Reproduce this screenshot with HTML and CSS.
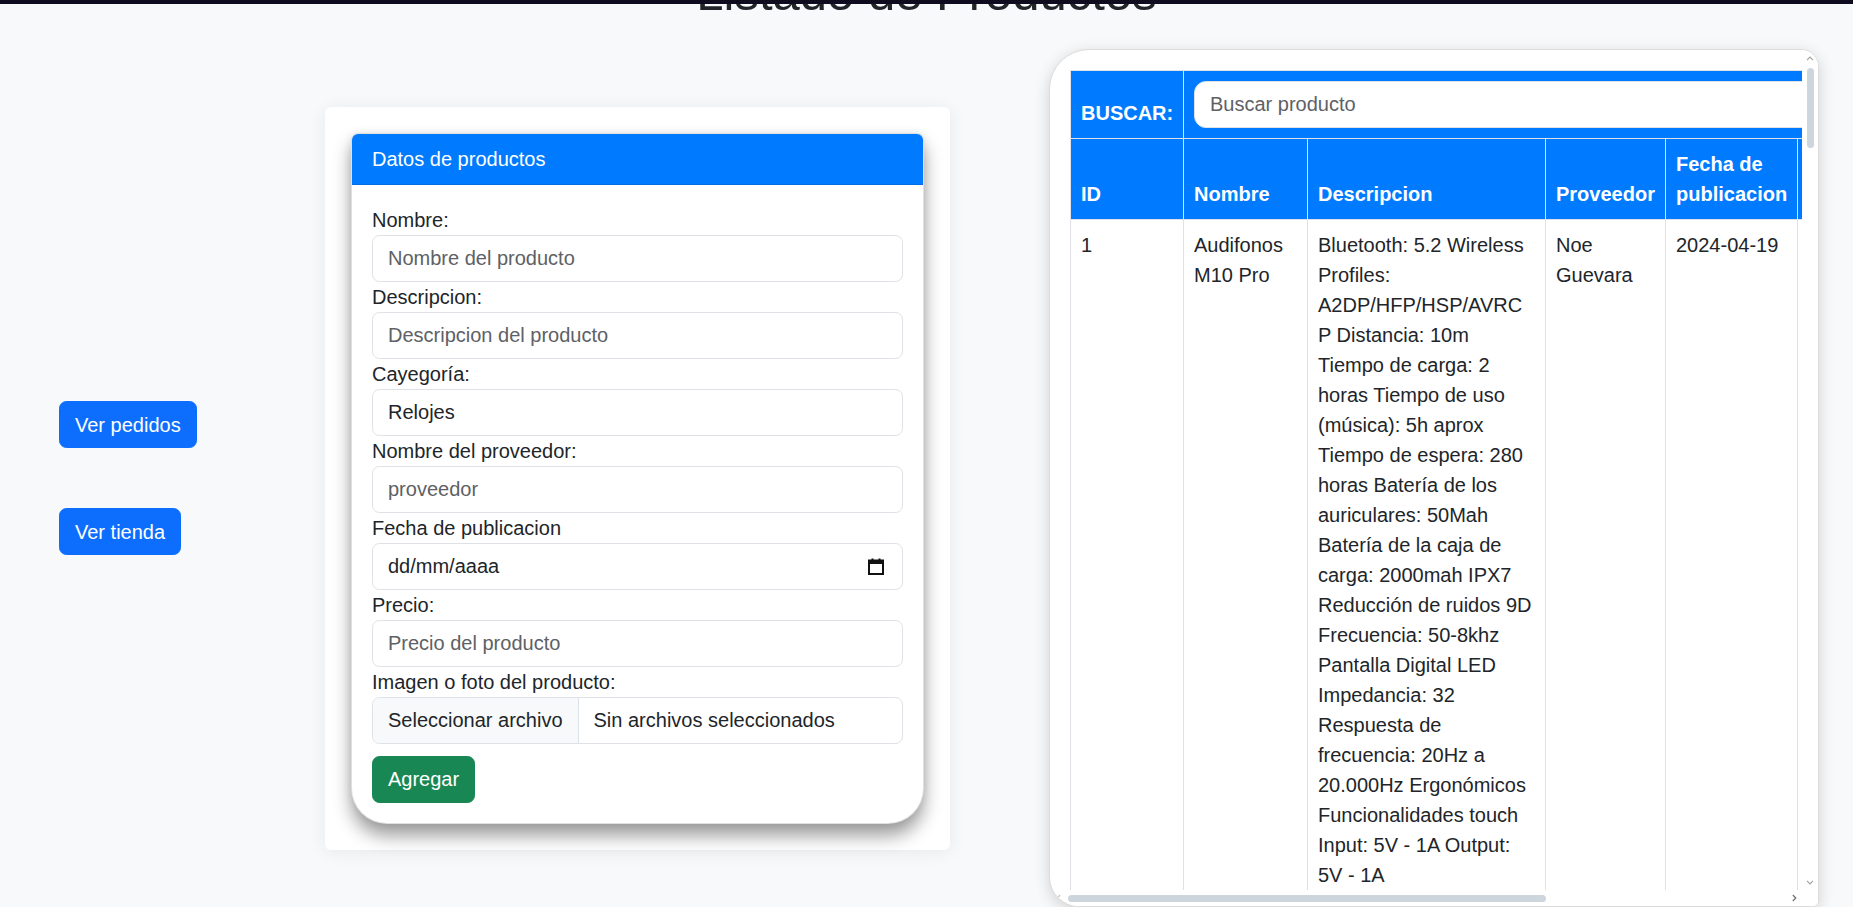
FILE: index.html
```html
<!DOCTYPE html>
<html lang="es">
<head>
<meta charset="utf-8">
<title>Listado de Productos</title>
<link rel="stylesheet" href="styles.css">
</head>
<body>
<div class="topbar"></div>
<h1 class="page-title">Listado de Productos</h1>
<main class="layout">
  <nav class="side">
    <a class="btn btn-primary">Ver pedidos</a>
    <a class="btn btn-primary">Ver tienda</a>
  </nav>

  <section class="panel">
    <div class="card">
      <div class="card-header">Datos de productos</div>
      <form class="card-body">
        <label class="field-label">Nombre:</label>
        <input class="form-control" type="text" placeholder="Nombre del producto">
        <label class="field-label">Descripcion:</label>
        <input class="form-control" type="text" placeholder="Descripcion del producto">
        <label class="field-label">Cayegoría:</label>
        <input class="form-control" type="text" value="Relojes">
        <label class="field-label">Nombre del proveedor:</label>
        <input class="form-control" type="text" placeholder="proveedor">
        <label class="field-label">Fecha de publicacion</label>
        <div class="form-control date-control">
          <span>dd/mm/aaaa</span>
          <svg class="cal-icon" width="16" height="17" viewBox="0 0 16 17" aria-hidden="true">
            <rect x="1" y="2.5" width="14" height="13.5" fill="none" stroke="#111" stroke-width="2"/>
            <rect x="1" y="2.5" width="14" height="3.5" fill="#111"/>
            <rect x="3.5" y="0.5" width="2" height="3" fill="#111"/>
            <rect x="10.5" y="0.5" width="2" height="3" fill="#111"/>
          </svg>
        </div>
        <label class="field-label">Precio:</label>
        <input class="form-control" type="text" placeholder="Precio del producto">
        <label class="field-label">Imagen o foto del producto:</label>
        <div class="form-control file-control">
          <span class="file-btn">Seleccionar archivo</span>
          <span class="file-name">Sin archivos seleccionados</span>
        </div>
        <button type="button" class="btn btn-success">Agregar</button>
      </form>
    </div>
  </section>

  <section class="table-card">
    <div class="table-scroll">
      <table class="products">
        <colgroup>
          <col class="c-id"><col class="c-nombre"><col class="c-desc"><col class="c-prov"><col class="c-fecha"><col class="c-precio"><col class="c-img"><col class="c-acc">
        </colgroup>
        <thead>
          <tr>
            <th class="nowrap">BUSCAR:</th>
            <th colspan="7"><input class="search" type="text" placeholder="Buscar producto"></th>
          </tr>
          <tr>
            <th>ID</th>
            <th>Nombre</th>
            <th>Descripcion</th>
            <th>Proveedor</th>
            <th>Fecha de publicacion</th>
            <th>Precio</th>
            <th>Imagen</th>
            <th>Acciones</th>
          </tr>
        </thead>
        <tbody>
          <tr>
            <td>1</td>
            <td>Audifonos M10 Pro</td>
            <td>Bluetooth: 5.2 Wireless Profiles: A2DP/HFP/HSP/AVRCP Distancia: 10m Tiempo de carga: 2 horas Tiempo de uso (música): 5h aprox Tiempo de espera: 280 horas Batería de los auriculares: 50Mah Batería de la caja de carga: 2000mah IPX7 Reducción de ruidos 9D Frecuencia: 50-8khz Pantalla Digital LED Impedancia: 32 Respuesta de frecuencia: 20Hz a 20.000Hz Ergonómicos Funcionalidades touch Input: 5V - 1A Output: 5V - 1A</td>
            <td>Noe Guevara</td>
            <td>2024-04-19</td>
            <td>150</td>
            <td>audifonos.jpg</td>
            <td>Editar Eliminar</td>
          </tr>
          <tr>
            <td>2</td>
            <td>Reloj Inteligente T500</td>
            <td>Pantalla: 1.75 pulgadas HD Bluetooth: 5.0 Llamadas por Bluetooth Monitor de ritmo cardiaco Monitor de presión arterial Contador de pasos Monitor de sueño Batería: 180mah Resistente al agua IP67</td>
            <td>Noe Guevara</td>
            <td>2024-04-19</td>
            <td>250</td>
            <td>reloj-t500.jpg</td>
            <td>Editar Eliminar</td>
          </tr>
        </tbody>
      </table>
    </div>
    <div class="vscroll">
      <span class="sb-btn">
        <svg width="8" height="5" viewBox="0 0 8 5" aria-hidden="true"><path d="M1 4.2 L4 1.2 L7 4.2" fill="none" stroke="#a3a3a3" stroke-width="1.2"/></svg>
      </span>
      <span class="vthumb"></span>
      <span class="sb-fill"></span>
      <span class="sb-btn">
        <svg width="8" height="5" viewBox="0 0 8 5" aria-hidden="true"><path d="M1 0.8 L4 3.8 L7 0.8" fill="none" stroke="#a3a3a3" stroke-width="1.2"/></svg>
      </span>
    </div>
    <div class="hscroll">
      <span class="sb-btn">
        <svg width="5" height="8" viewBox="0 0 5 8" aria-hidden="true"><path d="M4.2 1 L1.2 4 L4.2 7" fill="none" stroke="#c4c4c4" stroke-width="1.2"/></svg>
      </span>
      <span class="hthumb"></span>
      <span class="sb-fill"></span>
      <span class="sb-btn">
        <svg width="5" height="8" viewBox="0 0 5 8" aria-hidden="true"><path d="M0.8 1 L3.8 4 L0.8 7" fill="none" stroke="#6f6f6f" stroke-width="1.2"/></svg>
      </span>
    </div>
    <div class="sb-corner"></div>
  </section>
</main>
</body>
</html>
```

FILE: styles.css
```css
* {
  box-sizing: border-box;
}

html, body {
  margin: 0;
  padding: 0;
}

body {
  background: #f8f9fa;
  color: #212529;
  font-family: "Liberation Sans", Arial, sans-serif;
  font-size: 20px;
  line-height: 30px;
  overflow: hidden;
}

.topbar {
  position: fixed;
  top: 0;
  left: 0;
  right: 0;
  height: 4px;
  background: #0e0c1e;
  z-index: 10;
}

.page-title {
  margin: -36px 0 26px;
  font-size: 49px;
  line-height: 59px;
  font-weight: 400;
  text-align: center;
  color: #212529;
}

.layout {
  display: flex;
  align-items: center;
  padding-left: 59px;
}

.side {
  width: 266px;
  flex: none;
  display: flex;
  flex-direction: column;
  align-items: flex-start;
  gap: 60px;
}

.btn {
  display: inline-block;
  font-family: inherit;
  font-size: 20px;
  line-height: 30px;
  padding: 7.5px 15px;
  border: 1px solid transparent;
  border-radius: 7.5px;
  color: #fff;
  text-decoration: none;
  cursor: pointer;
}

.btn-primary {
  background: #0d6efd;
  border-color: #0d6efd;
}

.btn-success {
  background: #198754;
  border-color: #198754;
  margin-top: 12px;
}

/* Form panel */
.panel {
  width: 625px;
  flex: none;
  background: #fff;
  border-radius: 6px;
  padding: 26px;
  box-shadow: 0 2px 18px rgba(0, 0, 0, 0.07);
}

.card {
  background: #fff;
  border: 1px solid rgba(0, 0, 0, 0.12);
  border-radius: 7px 7px 36px 36px;
  overflow: hidden;
  box-shadow: 0 12px 18px rgba(0, 0, 0, 0.38), 0 0 8px rgba(0, 0, 0, 0.08);
}

.card-header {
  background: #007bff;
  color: #fff;
  padding: 10px 20px;
  line-height: 30px;
  border-bottom: 1px solid rgba(0, 0, 0, 0.1);
}

.card-body {
  display: flex;
  flex-direction: column;
  align-items: stretch;
  padding: 20px;
  margin: 0;
}

.field-label {
  display: block;
  line-height: 30px;
}

.form-control {
  display: block;
  width: 100%;
  height: 47px;
  font-family: inherit;
  font-size: 20px;
  line-height: 30px;
  padding: 7.5px 15px;
  color: #212529;
  background: #fff;
  border: 1px solid #dee2e6;
  border-radius: 7.5px;
  outline: none;
}

.form-control::placeholder {
  color: #5e6165;
  opacity: 1;
}

.date-control {
  display: flex;
  align-items: center;
  justify-content: space-between;
  padding-right: 18px;
}

.cal-icon {
  display: block;
}

.file-control {
  display: flex;
  padding: 0;
  overflow: hidden;
}

.file-btn {
  padding: 7.5px 15px;
  background: #f8f9fa;
  border-right: 1px solid #dee2e6;
  white-space: nowrap;
}

.file-name {
  padding: 7.5px 15px;
  white-space: nowrap;
}

.card-body .btn-success {
  align-self: flex-start;
}

/* Table panel */
.table-card {
  width: 770px;
  height: 858px;
  flex: none;
  margin-left: 99px;
  background: #fff;
  border: 1px solid #dcdcdc;
  border-radius: 40px 18px 6px 30px;
  overflow: hidden;
  box-shadow: 0 4px 16px rgba(0, 0, 0, 0.16);
  display: grid;
  grid-template-columns: 1fr 16px;
  grid-template-rows: 1fr 16px;
}

.table-scroll {
  overflow: hidden;
  padding: 20px 0 0 20px;
  min-width: 0;
  min-height: 0;
}

.vscroll {
  display: flex;
  flex-direction: column;
  align-items: center;
  background: #fff;
}

.hscroll {
  display: flex;
  align-items: center;
  background: #fff;
}

.sb-btn {
  flex: none;
  width: 16px;
  height: 16px;
  display: flex;
  align-items: center;
  justify-content: center;
}

.sb-fill {
  flex: 1;
}

.vthumb {
  flex: none;
  width: 7px;
  height: 80px;
  margin-top: 2px;
  border-radius: 4px;
  background: #cdd5dd;
}

.hthumb {
  flex: none;
  width: 478px;
  height: 7px;
  margin-left: 2px;
  border-radius: 4px;
  background: #cdd5dd;
}

.sb-corner {
  background: #fff;
}

.products {
  table-layout: fixed;
  width: 1093px;
  border-collapse: collapse;
  color: #212529;
}

.c-id { width: 113px; }
.c-nombre { width: 124px; }
.c-desc { width: 238px; }
.c-prov { width: 120px; }
.c-fecha { width: 132px; }
.c-precio { width: 100px; }
.c-img { width: 140px; }
.c-acc { width: 126px; }

.products th,
.products td {
  border: 1px solid #dee2e6;
  padding: 10px;
  text-align: left;
}

.products th {
  background: #007bff;
  color: #fff;
  font-weight: 700;
  vertical-align: bottom;
  overflow-wrap: normal;
}

.products th.nowrap {
  white-space: nowrap;
}

.products td {
  vertical-align: top;
  background: #fff;
  overflow-wrap: break-word;
}

.search {
  display: block;
  width: 100%;
  height: 47px;
  font-family: inherit;
  font-size: 20px;
  line-height: 30px;
  padding: 7.5px 15px;
  border: 1px solid #dee2e6;
  border-radius: 12px;
  background: #fff;
  color: #212529;
  outline: none;
}

.search::placeholder {
  color: #5e6165;
  opacity: 1;
}
```
